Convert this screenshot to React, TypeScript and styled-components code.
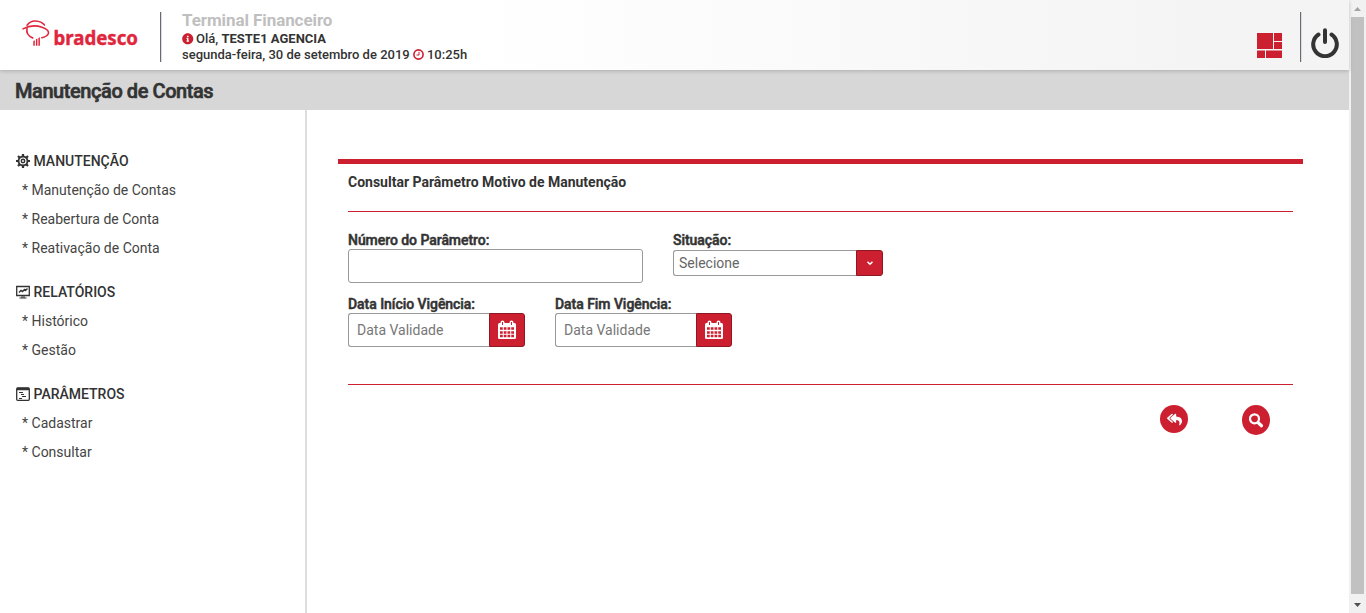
import React from 'react';
import styled, { createGlobalStyle, css } from 'styled-components';
import { FaInfoCircle, FaReplyAll } from 'react-icons/fa';

const red = '#cc1f2f';

const GlobalStyle = createGlobalStyle`
  * { box-sizing: border-box; }
  body { margin: 0; overflow: hidden; background: #fff; color: #333; font: 14px/20px Roboto, sans-serif; }
`;

const Shell = styled.div`display: flex; height: 613px; overflow: hidden;`;
const Page = styled.div`flex: 1; min-width: 0; display: flex; flex-direction: column;`;

const Header = styled.header`
  height: 70px; flex: none; display: flex; align-items: flex-start;
  background: linear-gradient(to right, #fff 35%, #f4f4f4 90%);
  box-shadow: 0 1px 4px rgba(0, 0, 0, .2);
  z-index: 1;
`;
const Logo = styled.div`width: 160px; height: 70px; padding: 18px 0 0 21px; svg { display: block; overflow: visible; }`;
const Divider = styled.div`width: 1px; height: 50px; margin-top: 12px; background: #6b6872; box-shadow: 1px 0 0 #dcdce0;`;
const Session = styled.div`
  flex: 1; padding: 11px 0 0 21px; font-size: 13px; line-height: 16px; font-weight: 500; white-space: nowrap;
`;
const Product = styled.div`font-size: 17px; line-height: 19px; height: 20px; color: #bfbfbf; font-weight: 700; letter-spacing: -0.08px;`;
const SmallIcon = styled.span`display: inline-block; vertical-align: -1px; width: 11px; height: 11px; margin-right: 3px; color: ${red}; svg { display: block; }`;
const HeaderTool = styled.div<{ $w: number; $top: number; $left?: number }>`
  width: ${p => p.$w}px; padding: ${p => p.$top}px 0 0 ${p => p.$left ?? 0}px; svg { display: block; }
`;

const TitleBar = styled.h1`
  margin: 0; height: 40px; flex: none; padding: 1px 15px 0; background: #d7d7d7;
  font-size: 20px; line-height: 40px; font-weight: 500; letter-spacing: -0.43px; -webkit-text-stroke: .6px #333;
`;
const Body = styled.div`flex: 1; display: flex;`;
const Sidebar = styled.nav`width: 307px; border-right: 2px solid #ddd; padding: 37px 0 0 16px;`;
const Group = styled.section`margin-bottom: 15px;`;
const GroupTitle = styled.div`
  height: 29px; padding-bottom: 1px; display: flex; align-items: center; gap: 3.5px; font-weight: 500; svg { display: block; }
`;
const MenuItem = styled.a`display: block; padding-left: 6px; line-height: 29px; color: #444;`;

const Main = styled.main`flex: 1; padding: 49px 46px 0 31px;`;
const Panel = styled.section`border-top: 5px solid ${red}; padding: 8px 10px 0;`;
const PanelTitle = styled.h2`margin: 0; font-size: 14px; line-height: 20px; font-weight: 700; height: 40px; border-bottom: 1px solid ${red};`;
const FieldRow = styled.div<{ $top: number }>`display: flex; gap: 30px; padding-top: ${p => p.$top}px;`;
const Field = styled.div<{ $w: number }>`width: ${p => p.$w}px;`;
const Label = styled.label`
  display: block; height: 18px; line-height: 18px; font-weight: 500; letter-spacing: -0.05px; white-space: nowrap;
  -webkit-text-stroke: .5px #333;
`;
const box = css`border: 1px solid #999; border-radius: 3px; background: #fff; color: #777; font: 14px Roboto, sans-serif; outline: none;`;
const Input = styled.input`
  ${box} display: block; width: 100%; height: 34px; padding: 0 8px;
  &::placeholder { color: #777; opacity: 1; }
`;
const InputGroup = styled.div`display: flex; ${Input} { flex: 1; min-width: 0; border-right: 0; border-radius: 3px 0 0 3px; }`;
const SelectBox = styled.div`display: flex; height: 26px; margin-top: 1px;`;
const SelectValue = styled.div`${box} flex: 1; border-right: 0; border-radius: 3px 0 0 3px; padding-left: 5px; line-height: 24px; color: #666;`;
const AddOn = styled.button<{ $w: number }>`
  width: ${p => p.$w}px; padding: 0; border: 1px solid #8f1723; border-radius: 0 3px 3px 0; background: ${red};
  display: flex; align-items: center; justify-content: center; color: #fff;
`;
const Actions = styled.div`
  margin-top: 37px; border-top: 1px solid ${red}; padding: 20px 23px 0 0; display: flex; justify-content: flex-end; gap: 54px;
`;
const RoundButton = styled.button<{ $h: number }>`
  width: 28px; height: ${p => p.$h}px; border: 0; padding: 0; border-radius: 50%; background: ${red}; color: #fff;
  display: flex; align-items: center; justify-content: center;
`;

const Scrollbar = styled.div`
  width: 17px; background: #f1f1f1; display: flex; flex-direction: column; align-items: center;
`;
const Arrow = styled.div<{ $down?: boolean }>`
  width: 17px; height: 17px; display: flex; align-items: center; justify-content: center;
  color: ${p => (p.$down ? '#505050' : '#a3a3a3')};
  svg { transform: ${p => (p.$down ? 'rotate(180deg)' : 'none')}; }
`;
const Thumb = styled.div`flex: 1; width: 13px; background: #c1c1c1; margin-bottom: 2px;`;

const ArrowIcon = () => <svg width="7" height="4"><path d="M0 4L3.5 0L7 4Z" fill="currentColor" /></svg>;

const BrandMark = () => (
  <svg width="119" height="34" viewBox="0 0 119 34">
    <g fill="none" stroke="#e0263d" strokeLinecap="round">
      <path d="M6 7.200C8.500 3.800 11.500 2.700 14.500 2.900C18.500 3.100 21.500 4.500 23.500 7" strokeWidth="1.500" />
      <path d="M2 10.900C8 7.600 15.500 7.400 21 9.200C26 10.800 28.600 13.500 27.200 16C26.200 17.900 23.800 19.100 20.800 19.700" strokeWidth="1.600" />
      <path d="M6 10.500C5.200 14.500 7.500 18.200 11.800 20" strokeWidth="1.600" />
    </g>
    <path d="M12.300 23L13.800 22.300V27.800H12.300ZM14.900 21.200L16.400 20.500V27.800H14.900ZM17.400 20L18.900 19.300V27.800H17.400Z" fill="#e0263d" />
    <text x="32.500" y="27" fill="#e0263d" stroke="#e0263d" strokeWidth=".4" fontFamily="'Noto Sans', sans-serif" fontSize="20" fontWeight="700" textLength="84.500" lengthAdjust="spacingAndGlyphs">bradesco</text>
  </svg>
);

const ClockIcon = () => (
  <svg width="11" height="11" fill="none" stroke="currentColor">
    <circle cx="5.500" cy="5.500" r="4.600" strokeWidth="1.600" /><path d="M6 2.800V6H3.500" />
  </svg>
);

const TilesIcon = () => (
  <svg width="25" height="25" fill={red}>
    <path d="M0 0H16V16H0ZM17 0H25V8H17ZM17 9H25V16H17ZM0 17.500H8V25H0ZM9 17.500H25V25H9Z" />
  </svg>
);

const PowerIcon = () => (
  <svg width="28" height="30" fill="none" stroke="#333" strokeWidth="4" strokeLinecap="round">
    <path d="M7.500 6.500A11.800 11.800 0 1 0 20.500 6.500M14 2.300V14" />
  </svg>
);

const GearIcon = () => (
  <svg width="14" height="14" fill="none" stroke="#333">
    <path d="M7 0V3M7 11V14M0 7H3M11 7H14M2 2L4.200 4.200M9.800 9.800L12 12M2 12L4.200 9.800M9.800 4.200L12 2" strokeWidth="2.200" />
    <circle cx="7" cy="7" r="4.500" strokeWidth="1.900" />
    <circle cx="7" cy="7" r="1.700" strokeWidth="1.500" />
  </svg>
);

const MonitorIcon = () => (
  <svg width="14" height="14" fill="none" stroke="#333">
    <path d="M.7 1.500H13.300V10.500H.7Z" strokeWidth="1.300" />
    <path d="M3 7.500L5 5.500L6.500 6.500L8.500 4.500L9.500 5.500L11.500 3.500" strokeWidth="1.400" />
    <path d="M5 12H9M3.500 13H10.500" />
  </svg>
);

const WindowIcon = () => (
  <svg width="14" height="14" fill="none" stroke="#333">
    <rect x=".7" y="1" width="12.600" height="12.300" rx="1" strokeWidth="1.300" />
    <path d="M1 2H13" strokeWidth="2.500" />
    <path d="M3 5.500H7M5 7.500H8M6 9.500H10M3 11.500H6" />
  </svg>
);

const CalendarIcon = () => (
  <svg width="18" height="20">
    <rect x="0" y="3" width="18" height="16" rx="1.500" fill="#fff" />
    <path d="M4.500 5V2.500M13.500 5V2.500" stroke="#fff" strokeWidth="4" strokeLinecap="round" />
    <path d="M4.500 2V5M13.500 2V5" stroke={red} strokeWidth="1" />
    <path d="M2 8.500H16M2 12.500H16M2 16H16" stroke={red} strokeWidth="2.500" strokeDasharray="2.750 1" />
  </svg>
);

const SearchIcon = () => (
  <svg width="16" height="16" fill="none" stroke="#fff" strokeLinecap="round">
    <circle cx="6.500" cy="6.800" r="4.500" strokeWidth="2.200" /><path d="M10.500 11L13.500 13.700" strokeWidth="3.200" />
  </svg>
);

const ChevronIcon = () => (
  <svg width="8" height="6" fill="none" stroke="currentColor" strokeWidth="1.600"><path d="M1.500 1.700L4 4.200L6.500 1.700" /></svg>
);

const groups = [
  { title: 'MANUTENÇÃO', icon: <GearIcon />, items: ['Manutenção de Contas', 'Reabertura de Conta', 'Reativação de Conta'] },
  { title: 'RELATÓRIOS', icon: <MonitorIcon />, items: ['Histórico', 'Gestão'] },
  { title: 'PARÂMETROS', icon: <WindowIcon />, items: ['Cadastrar', 'Consultar'] },
];

const DateField = ({ label }: { label: string }) => (
  <Field $w={177}>
    <Label>{label}</Label>
    <InputGroup>
      <Input placeholder="Data Validade" />
      <AddOn $w={36} aria-label={label}><CalendarIcon /></AddOn>
    </InputGroup>
  </Field>
);

export default function App() {
  return (
    <Shell>
      <GlobalStyle />
      <Page>
        <Header>
          <Logo><BrandMark /></Logo>
          <Divider />
          <Session>
            <Product>Terminal Financeiro</Product>
            <div><SmallIcon><FaInfoCircle size={11.5} /></SmallIcon>Olá, <b>TESTE1 AGENCIA</b></div>
            <div>segunda-feira, 30 de setembro de 2019 <SmallIcon><ClockIcon /></SmallIcon>10:25h</div>
          </Session>
          <HeaderTool $w={43} $top={33}><TilesIcon /></HeaderTool>
          <Divider />
          <HeaderTool $w={48} $top={28} $left={10}><PowerIcon /></HeaderTool>
        </Header>
        <TitleBar>Manutenção de Contas</TitleBar>
        <Body>
          <Sidebar>
            {groups.map(g => (
              <Group key={g.title}>
                <GroupTitle>{g.icon}{g.title}</GroupTitle>
                {g.items.map(i => <MenuItem key={i}>* {i}</MenuItem>)}
              </Group>
            ))}
          </Sidebar>
          <Main>
            <Panel>
              <PanelTitle>Consultar Parâmetro Motivo de Manutenção</PanelTitle>
              <FieldRow $top={19}>
                <Field $w={295}><Label>Número do Parâmetro:</Label><Input aria-label="Número do Parâmetro" /></Field>
                <Field $w={210}>
                  <Label>Situação:</Label>
                  <SelectBox><SelectValue>Selecione</SelectValue><AddOn $w={27} aria-label="Situação"><ChevronIcon /></AddOn></SelectBox>
                </Field>
              </FieldRow>
              <FieldRow $top={12}>
                <DateField label="Data Início Vigência:" />
                <DateField label="Data Fim Vigência:" />
              </FieldRow>
              <Actions>
                <RoundButton $h={28} aria-label="Voltar"><FaReplyAll size={15} /></RoundButton>
                <RoundButton $h={30} aria-label="Consultar"><SearchIcon /></RoundButton>
              </Actions>
            </Panel>
          </Main>
        </Body>
      </Page>
      <Scrollbar><Arrow><ArrowIcon /></Arrow><Thumb /><Arrow $down><ArrowIcon /></Arrow></Scrollbar>
    </Shell>
  );
}
